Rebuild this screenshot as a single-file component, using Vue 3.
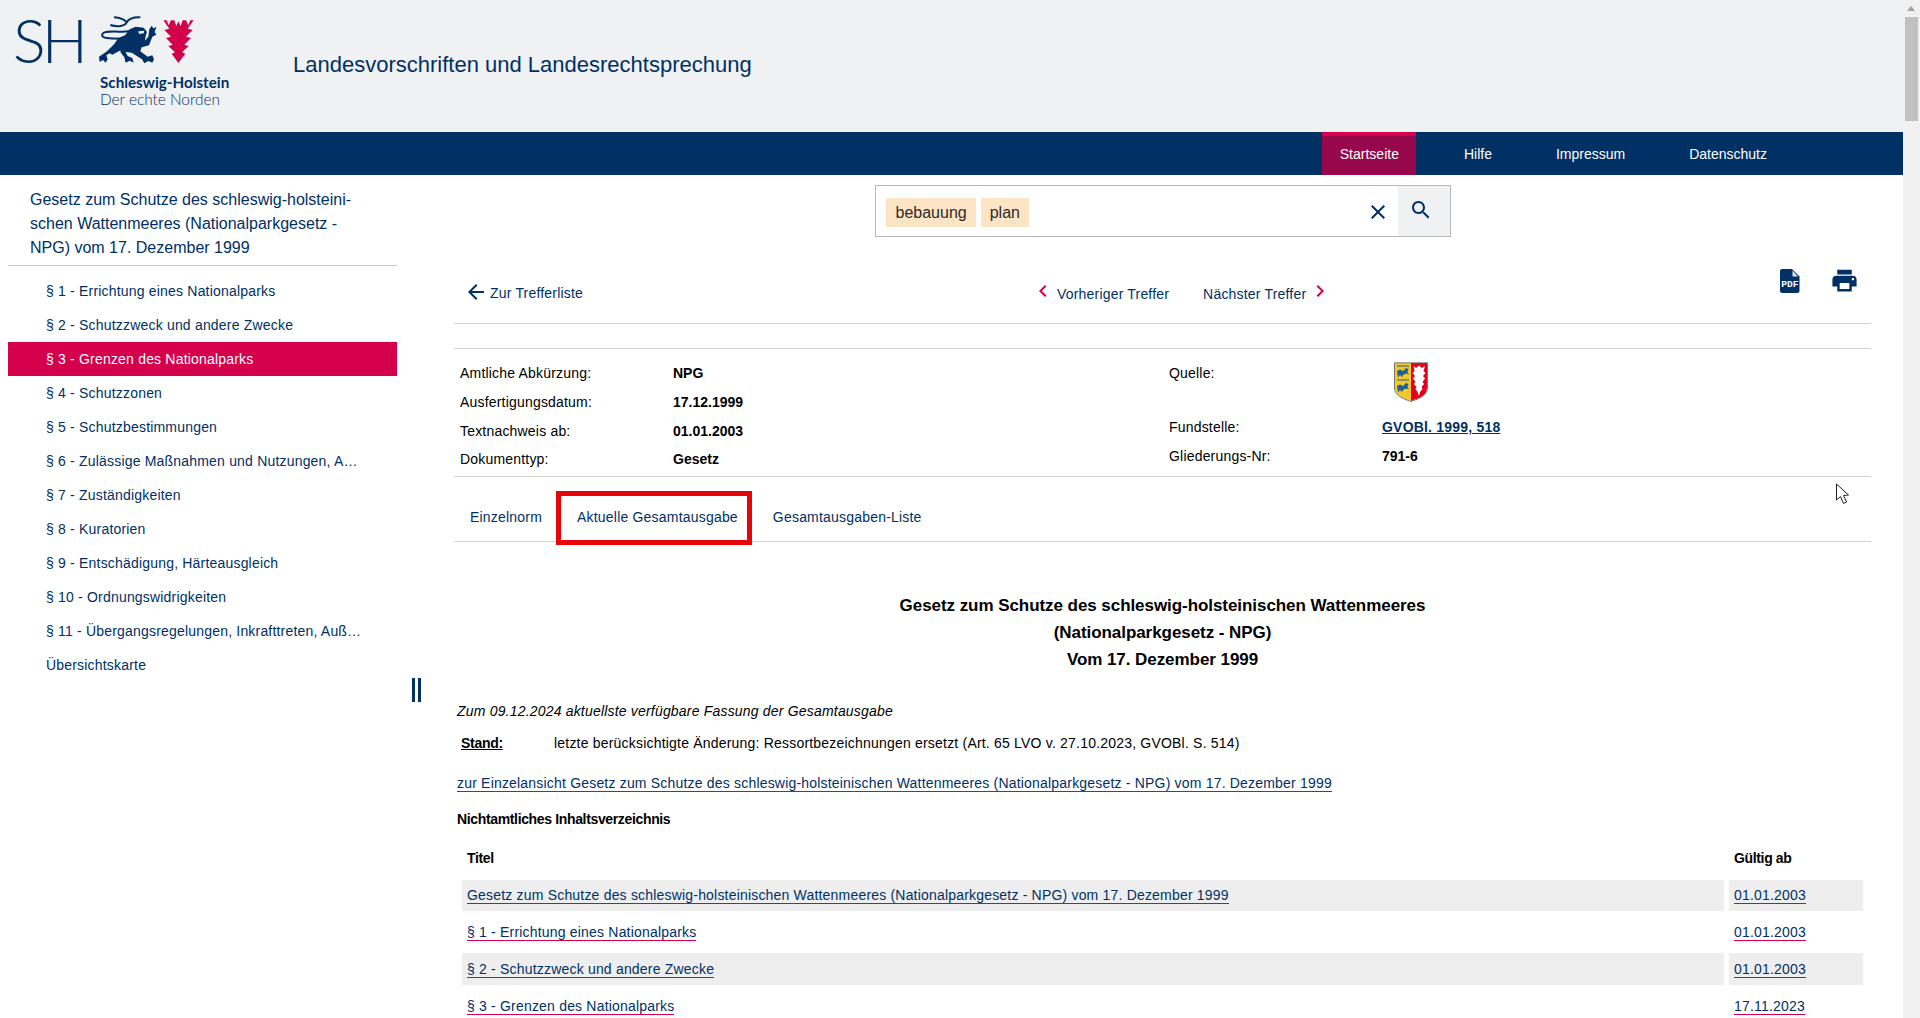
<script setup>
const menu = [
  '§ 1 - Errichtung eines Nationalparks',
  '§ 2 - Schutzzweck und andere Zwecke',
  '§ 3 - Grenzen des Nationalparks',
  '§ 4 - Schutzzonen',
  '§ 5 - Schutzbestimmungen',
  '§ 6 - Zulässige Maßnahmen und Nutzungen, A…',
  '§ 7 - Zuständigkeiten',
  '§ 8 - Kuratorien',
  '§ 9 - Entschädigung, Härteausgleich',
  '§ 10 - Ordnungswidrigkeiten',
  '§ 11 - Übergangsregelungen, Inkrafttreten, Auß…',
  'Übersichtskarte'
]
const nav = ['Startseite', 'Hilfe', 'Impressum', 'Datenschutz']
const metaLeft = [
  ['Amtliche Abkürzung:', 'NPG'],
  ['Ausfertigungsdatum:', '17.12.1999'],
  ['Textnachweis ab:', '01.01.2003'],
  ['Dokumenttyp:', 'Gesetz']
]
const rows = [
  ['Gesetz zum Schutze des schleswig-holsteinischen Wattenmeeres (Nationalparkgesetz - NPG) vom 17. Dezember 1999', '01.01.2003'],
  ['§ 1 - Errichtung eines Nationalparks', '01.01.2003'],
  ['§ 2 - Schutzzweck und andere Zwecke', '01.01.2003'],
  ['§ 3 - Grenzen des Nationalparks', '17.11.2023']
]
</script>

<template>
  <div class="app">
    <div class="page">
      <header class="head">
        <div class="logo">
          <div class="logo-top">
            <span class="sh">SH</span>
            <svg class="emblem" width="105" height="56" viewBox="0 0 315 168">
              <g fill="none" stroke="#003064" stroke-width="6">
                <path d="M57 16C74 17 88 22 95 31C90 42 68 46 46 39" />
                <path d="M136 16C116 15 101 21 95 31" />
                <path d="M108 56C72 64 30 52 22 66C16 80 48 80 78 80" />
              </g>
              <path fill="#003064" d="M104 52L122 44L146 47L156 60L152 72L150 86L160 74L163 52L170 41L175 49L184 45L179 60L184 68L172 74L162 100L140 106L136 118L158 134L172 130L177 142L172 152L160 147L148 154L141 142L110 122L94 120L74 116L52 128L44 124L34 130L38 142L32 152L24 144L14 150L12 134L36 118L58 96L70 78L90 70Z" />
              <path fill="#003064" d="M76 120L84 106L98 132L112 138L116 152L104 146L92 152L88 136Z" />
              <path fill="#f0f1f3" d="M130 58L148 56L146 64L132 66Z" />
              <path fill="#d4004b" d="M205 25L215 25L221 40L228 25L238 25L244 42L250 28L257 42L263 25L273 25L280 40L286 25L296 25L278 50L293 54L273 74L288 78L268 98L281 102L261 121L271 125L250 153L230 125L240 121L220 102L233 98L213 78L228 74L208 54L223 50Z" />
            </svg>
          </div>
          <div class="logo-name">Schleswig-Holstein</div>
          <div class="logo-sub">Der echte Norden</div>
        </div>
        <div class="site-title">Landesvorschriften und Landesrechtsprechung</div>
      </header>

      <nav class="nav">
        <a v-for="(n, i) in nav" :key="n" class="nav-item" :class="{ on: i === 0 }">{{ n }}</a>
      </nav>

      <div class="body">
        <aside class="side">
          <div class="side-title">
            Gesetz zum Schutze des schleswig-holsteini-<br />schen Wattenmeeres (Nationalparkgesetz -<br />NPG) vom 17. Dezember 1999
          </div>
          <ul class="menu">
            <li v-for="(m, i) in menu" :key="m" class="menu-item" :class="{ active: i === 2 }">{{ m }}</li>
          </ul>
          <div class="handle"><i></i><i></i></div>
        </aside>

        <main class="main">
          <div class="search">
            <div class="search-field">
              <span class="tag">bebauung</span>
              <span class="tag">plan</span>
              <svg class="clear" width="24" height="24" viewBox="0 0 24 24"><path fill="#003064" d="M19 6.41L17.59 5 12 10.59 6.41 5 5 6.41 10.59 12 5 17.59 6.41 19 12 13.41 17.59 19 19 17.59 13.41 12z" /></svg>
            </div>
            <div class="search-btn">
              <svg width="24" height="24" viewBox="0 0 24 24"><path fill="#003064" d="M15.5 14h-.79l-.28-.27C15.41 12.59 16 11.11 16 9.5 16 5.91 13.09 3 9.5 3S3 5.91 3 9.5 5.91 16 9.5 16c1.61 0 3.09-.59 4.23-1.57l.27.28v.79l5 4.99L20.49 19l-4.99-5zm-6 0C7.01 14 5 11.99 5 9.5S7.01 5 9.5 5 14 7.01 14 9.5 11.99 14 9.5 14z" /></svg>
            </div>
          </div>

          <div class="toolbar">
            <a class="back">
              <svg width="24" height="24" viewBox="0 0 24 24"><path fill="#003064" d="M20 11H7.83l5.59-5.59L12 4l-8 8 8 8 1.41-1.41L7.83 13H20v-2z" /></svg>
              Zur Trefferliste
            </a>
            <div class="pager">
              <a class="prev">
                <svg width="24" height="24" viewBox="0 0 24 24"><path fill="#d4004b" d="M15.41 7.41L14 6l-6 6 6 6 1.41-1.41L10.83 12z" /></svg>
                <span>Vorheriger Treffer</span>
              </a>
              <a class="next">
                <span>Nächster Treffer</span>
                <svg width="24" height="24" viewBox="0 0 24 24"><path fill="#d4004b" d="M10 6L8.59 7.41 13.17 12l-4.58 4.59L10 18l6-6z" /></svg>
              </a>
            </div>
            <div class="tools">
              <svg width="20" height="24" viewBox="0 0 20 24">
                <path fill="#003064" d="M2 0H12L19.500 7.500V21.500Q19.500 24 17 24H2Q0 24 0 22V2Q0 0 2 0Z" />
                <path fill="#dfe6ee" d="M12.500 1.500L18 7.500H12.500Z" />
                <text x="9.800" y="17.500" class="pdf-text">PDF</text>
              </svg>
              <svg width="29" height="29" viewBox="0 0 24 24"><path fill="#003064" d="M19 8H5c-1.66 0-3 1.34-3 3v6h4v4h12v-4h4v-6c0-1.66-1.34-3-3-3zm-3 11H8v-5h8v5zm3-7c-.55 0-1-.45-1-1s.45-1 1-1 1 .45 1 1-.45 1-1 1zm-1-9H6v4h12V3z" /></svg>
            </div>
          </div>

          <div class="meta">
            <div class="meta-col">
              <div v-for="m in metaLeft" :key="m[0]" class="meta-row">
                <span class="meta-label">{{ m[0] }}</span><b>{{ m[1] }}</b>
              </div>
            </div>
            <div class="meta-col">
              <div class="meta-row source">
                <span class="meta-label">Quelle:</span>
                <svg class="crest" width="34" height="40" viewBox="0 0 34 40">
                  <path fill="#f4c72a" d="M1 1H17V39C8 36 1 33 1 26Z" />
                  <path fill="#e2001a" d="M17 1H33V26C33 33 26 36 17 39Z" />
                  <path fill="none" stroke="#777" stroke-width="1" d="M.5 .8H33.500V26C33.500 33 26 36.500 17 39.500C8 36.500 .5 33 .5 26Z" />
                  <path fill="#fff" d="M19.500 4L22 6L25 3.500L28 6L31 4L29.500 9L31.500 11L29 14L31 16.500L28.500 20L30 22L27.500 25L28.500 27L26 30L25 34L23.500 30L21.500 27L22.500 25L20 22L21.500 20L19 16.500L21 14L18.500 11L20.500 9Z" />
                  <path fill="#1f6299" d="M3 9L6 7.500L9 9L12 6L14.500 7L13.500 10L15 12.500L12 11.500L9 13L8 15L6 13L4 15.500L3.500 12.500Z" />
                  <path fill="#1f6299" d="M3 24L6 22.500L9 24L12 21L14.500 22L13.500 25L15 27.500L12 26.500L9 28L8 30L6 28L4 30.500L3.500 27.500Z" />
                  <path fill="none" stroke="#1f6299" stroke-width="1" d="M3 18H15M3 4H15" />
                </svg>
              </div>
              <div class="meta-row"><span class="meta-label">Fundstelle:</span><a class="fund">GVOBl. 1999, 518</a></div>
              <div class="meta-row"><span class="meta-label">Gliederungs-Nr:</span><b>791-6</b></div>
            </div>
          </div>

          <div class="tabs">
            <a class="tab">Einzelnorm</a>
            <a class="tab current">Aktuelle Gesamtausgabe<span class="mark"></span></a>
            <a class="tab">Gesamtausgaben-Liste</a>
          </div>

          <article class="doc">
            <h1 class="doc-title">Gesetz zum Schutze des schleswig-holsteinischen Wattenmeeres<br />(Nationalparkgesetz - NPG)<br />Vom 17. Dezember 1999</h1>
            <p class="fassung">Zum 09.12.2024 aktuellste verfügbare Fassung der Gesamtausgabe</p>
            <p class="stand"><b>Stand:</b><span>letzte berücksichtigte Änderung: Ressortbezeichnungen ersetzt (Art. 65 LVO v. 27.10.2023, GVOBl. S. 514)</span></p>
            <p class="single"><a class="lnk">zur Einzelansicht Gesetz zum Schutze des schleswig-holsteinischen Wattenmeeres (Nationalparkgesetz - NPG) vom 17. Dezember 1999</a></p>
            <h2 class="toc">Nichtamtliches Inhaltsverzeichnis</h2>
            <table class="tbl">
              <colgroup><col /><col class="col-date" /></colgroup>
              <thead><tr><th>Titel</th><th>Gültig ab</th></tr></thead>
              <tbody>
                <tr v-for="r in rows" :key="r[0]">
                  <td><a class="lnk">{{ r[0] }}</a></td>
                  <td><a class="lnk">{{ r[1] }}</a></td>
                </tr>
              </tbody>
            </table>
          </article>
        </main>
      </div>
    </div>

    <div class="rail">
      <span class="rail-arrow"></span>
      <span class="rail-thumb"></span>
    </div>

    <svg class="cursor" width="18" height="22" viewBox="0 0 18 22">
      <path fill="#fff" stroke="#222" stroke-width="1" d="M1.500 1V17L5.500 13.500L8.500 20.500L11.500 19L8.500 12.500L13.500 12Z" />
    </svg>
  </div>
</template>

<style>
html, body { margin: 0; background: #fff; overflow: hidden; }
</style>

<style scoped>
* { box-sizing: border-box; }
.app {
  position: relative;
  display: flex;
  width: 1920px;
  height: 1018px;
  overflow: hidden;
  background: #fff;
  color: #000;
  font: 14px/20px "Liberation Sans", Arial, sans-serif;
}
.page { width: 1903px; flex: none; }
.head {
  height: 132px;
  background: #f0f1f3;
  display: flex;
  align-items: center;
  color: #003064;
}
.logo { width: 293px; height: 132px; padding: 12px 0 0 13px; flex: none; }
.logo-top { display: flex; align-items: center; height: 56px; }
.sh {
  width: 82px;
  font: 300 61px/56px Lato, sans-serif;
  letter-spacing: -4px;
  color: #003064;
}
.emblem { display: block; flex: none; }
.logo-name {
  margin: 6px 0 0 87px;
  font: 700 15.2px/17px Lato, sans-serif;
  white-space: nowrap;
}
.logo-sub {
  margin-left: 87px;
  font: 300 15.4px/17px Lato, sans-serif;
  white-space: nowrap;
}
.site-title { font-size: 22px; line-height: 28px; margin-top: -3px; }

.nav {
  height: 43px;
  background: #003064;
  display: flex;
  justify-content: flex-end;
  gap: 32px;
  padding-right: 120px;
}
.nav-item {
  padding: 0 16px;
  display: flex;
  align-items: center;
  color: #fff;
}
.nav-item.on { background: #96074b; box-shadow: inset 0 4px 0 #d4004b; padding: 0 17px 0 18px; }

.body { display: flex; align-items: flex-start; }
.side { position: relative; width: 389px; margin-left: 8px; flex: none; color: #003064; }
.side-title {
  padding: 13px 0 5px 22px;
  font-size: 16px;
  line-height: 24px;
  border-bottom: 1px solid #c8c8c8;
}
.menu { list-style: none; margin: 8px 0 0; padding: 0; }
.menu-item {
  height: 34px;
  line-height: 34px;
  padding-left: 38px;
  white-space: nowrap;
  letter-spacing: .19px;
}
.menu-item.active { background: #d4004b; color: #fff; }
.handle { position: absolute; left: 404px; top: 503px; display: flex; gap: 3px; }
.handle i { display: block; width: 3px; height: 24px; background: #003064; }

.main { width: 1417px; margin-left: 57px; flex: none; }
.search {
  width: 576px;
  height: 52px;
  margin: 10px auto 0;
  border: 1px solid #b8b8b8;
  display: flex;
}
.search-field { flex: 1; display: flex; align-items: center; gap: 4.500px; padding: 0 0 0 10px; }
.tag {
  height: 29px;
  line-height: 29px;
  padding: 0 9.500px 0 10px;
  background: #fde4c4;
  color: #2b2b2b;
  font-size: 16px;
  margin-top: 2px;
}
.tag + .tag { padding: 0 9px; }
.clear { margin-left: auto; margin-right: 8px; margin-top: 2px; }
.search-btn { width: 52px; background: #f0f1f3; padding: 12px 0 0 11px; }
.search-btn svg { display: block; }

.toolbar {
  height: 87px;
  border-bottom: 1px solid #d2d2d2;
  display: grid;
  grid-template-columns: 577px 1fr auto;
  align-items: start;
  color: #003064;
}
.back { display: flex; align-items: center; gap: 2px; margin: 44px 0 0 10px; height: 24px; line-height: 24px; letter-spacing: .19px; }
.back svg { margin-top: -2px; }
.pager { display: flex; gap: 34px; margin-top: 42px; letter-spacing: .19px; }
.prev, .next { display: flex; align-items: flex-start; }
.prev span, .next span { margin-top: 5px; }
.prev span { margin-left: 2px; }
.next span { margin-right: 2px; }
.tools { display: flex; align-items: flex-start; gap: 30px; margin: 32px 12px 0 0; }
.tools svg:last-child { margin-top: -3px; }
.pdf-text {
  font: 700 9.500px "Liberation Mono", monospace;
  fill: #fff;
  text-anchor: middle;
}

.meta {
  margin-top: 24px;
  border-top: 1px solid #d2d2d2;
  border-bottom: 1px solid #d2d2d2;
  height: 129px;
  padding: 10px 0 0 6px;
  display: grid;
  grid-template-columns: 709px 1fr;
}
.meta-row { display: flex; align-items: center; height: 28.67px; }
.meta-label { width: 213px; flex: none; letter-spacing: .19px; }
.source { height: 54px; align-items: flex-start; padding-top: 4px; }
.crest { margin-left: 12px; margin-top: -1px; }
.fund { color: #003064; font-weight: 700; text-decoration: underline; letter-spacing: .2px; }

.tabs {
  height: 65px;
  border-bottom: 1px solid #d2d2d2;
  display: flex;
  gap: 3px;
  color: #003064;
  letter-spacing: .2px;
}
.tab { position: relative; padding: 30px 16px 0; line-height: 20px; }
.mark {
  position: absolute;
  left: -5px;
  top: 14px;
  width: 196px;
  height: 54px;
  border: 5px solid #e80509;
}

.doc { padding: 0 3px; }
.doc-title {
  margin: 50px 0 0;
  text-align: center;
  font-size: 17px;
  line-height: 27px;
  font-weight: 700;
  letter-spacing: -.06px;
}
.fassung { margin: 28px 0 0; font-style: italic; letter-spacing: .19px; }
.stand { margin: 12px 0 0 4px; display: flex; }
.stand b { width: 93px; text-decoration: underline; flex: none; letter-spacing: -.3px; }
.stand span { letter-spacing: .2px; }
.single { margin: 20px 0 0; }
.lnk { color: #003064; border-bottom: 1px solid #d4004b; letter-spacing: .19px; }
.toc { margin: 16px 0 0; font-size: 14px; line-height: 20px; font-weight: 700; letter-spacing: -.35px; }
.tbl {
  width: 1411px;
  margin-top: 8px;
  table-layout: fixed;
  border-collapse: separate;
  border-spacing: 5px;
}
.col-date { width: 134px; }
.tbl th { text-align: left; height: 33px; padding: 0 5px 2px; font-weight: 700; letter-spacing: -.35px; }
.tbl td { height: 32px; padding: 0 5px 1px; }
.tbl tbody tr:first-child td { height: 31px; }
.tbl tbody tr:nth-child(odd) td { background: #eee; }

.rail { width: 17px; height: 1018px; background: #f1f1f1; position: relative; flex: none; }
.rail-arrow {
  position: absolute;
  left: 4px;
  top: 6px;
  border-left: 4px solid transparent;
  border-right: 4px solid transparent;
  border-bottom: 5px solid #a3a3a3;
}
.rail-thumb { position: absolute; left: 2px; top: 17px; width: 13px; height: 104px; background: #c1c1c1; }
.cursor { position: absolute; left: 1835px; top: 483px; }
</style>
